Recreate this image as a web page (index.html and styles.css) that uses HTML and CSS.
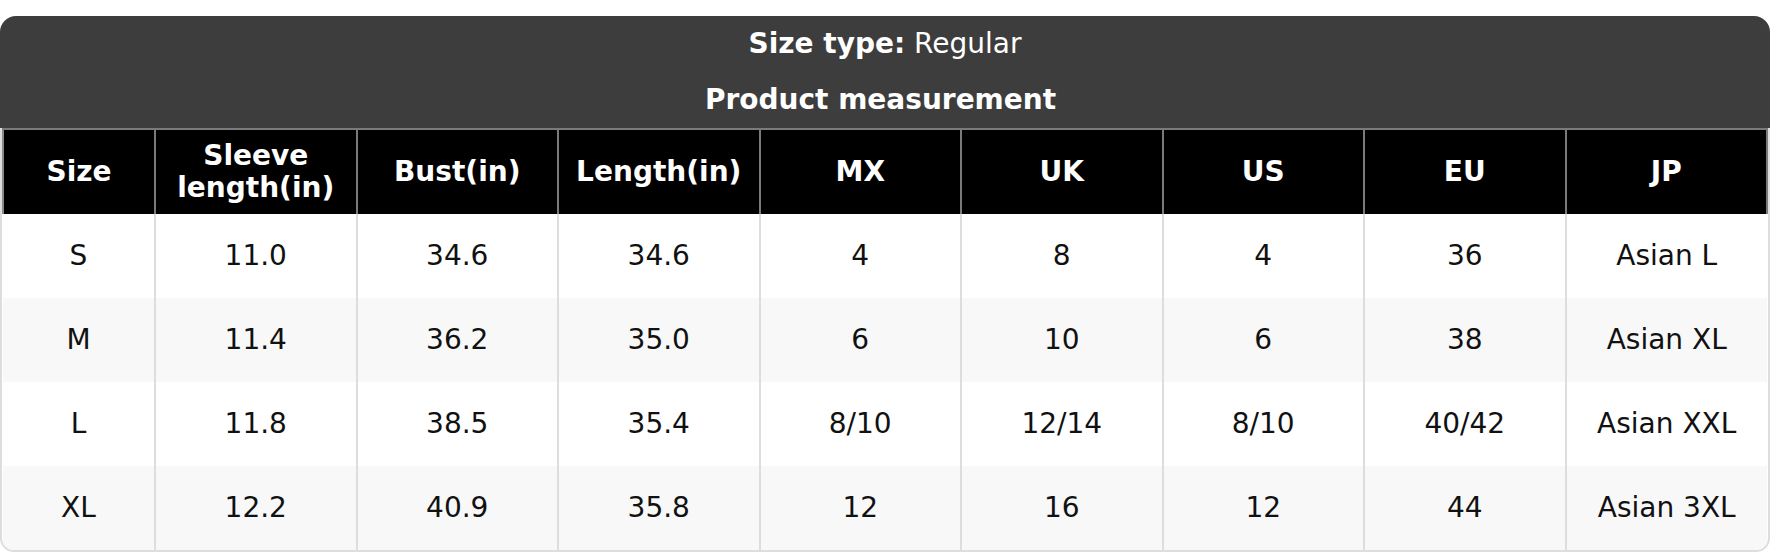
FILE: index.html
```html
<!DOCTYPE html>
<html lang="en">
<head>
<meta charset="utf-8">
<title>Size chart</title>
<link rel="stylesheet" href="styles.css">
</head>
<body>
<div class="card">
  <div class="title">
    <div class="title-line"><strong>Size type:</strong> Regular</div>
    <div class="title-line title-main"><strong>Product measurement</strong></div>
  </div>
  <div class="table-wrap">
    <table class="chart">
      <colgroup>
        <col class="col-size">
        <col><col><col><col><col><col><col><col>
      </colgroup>
      <thead>
        <tr>
          <th>Size</th>
          <th>Sleeve length(in)</th>
          <th>Bust(in)</th>
          <th>Length(in)</th>
          <th>MX</th>
          <th>UK</th>
          <th>US</th>
          <th>EU</th>
          <th>JP</th>
        </tr>
      </thead>
      <tbody>
        <tr><td>S</td><td>11.0</td><td>34.6</td><td>34.6</td><td>4</td><td>8</td><td>4</td><td>36</td><td>Asian L</td></tr>
        <tr><td>M</td><td>11.4</td><td>36.2</td><td>35.0</td><td>6</td><td>10</td><td>6</td><td>38</td><td>Asian XL</td></tr>
        <tr><td>L</td><td>11.8</td><td>38.5</td><td>35.4</td><td>8/10</td><td>12/14</td><td>8/10</td><td>40/42</td><td>Asian XXL</td></tr>
        <tr><td>XL</td><td>12.2</td><td>40.9</td><td>35.8</td><td>12</td><td>16</td><td>12</td><td>44</td><td>Asian 3XL</td></tr>
      </tbody>
    </table>
  </div>
</div>
</body>
</html>
```
FILE: styles.css
```css
html, body {
  margin: 0;
  padding: 0;
  background: #ffffff;
}

body {
  font-family: "DejaVu Sans", "Liberation Sans", sans-serif;
  font-size: 28px;
  color: #111111;
}

.card {
  margin-top: 16px;
  width: 1770px;
}

.title {
  background: #3d3d3d;
  color: #ffffff;
  border-radius: 16px 16px 0 0;
  padding: 11px 0 12px;
  display: flex;
  flex-direction: column;
  gap: 23px;
  text-align: center;
  line-height: 33px;
}

.title strong {
  font-weight: bold;
}

.title-main {
  padding-right: 9px;
}

.table-wrap {
  border: 2px solid #dddddd;
  border-top: 0;
  border-radius: 0 0 14px 14px;
  overflow: hidden;
}

.chart {
  width: 100%;
  border-collapse: collapse;
  table-layout: fixed;
}

.col-size {
  width: 152px;
}

.chart th {
  background: #000000;
  color: #ffffff;
  font-weight: bold;
  line-height: 32px;
  height: 84px;
  padding: 0 8px;
  border: 2px solid #7a7a7a;
  border-bottom: 0;
  vertical-align: middle;
  text-align: center;
}

.chart th:first-child {
  border-left-color: #8a8a8a;
}

.chart td {
  height: 84px;
  padding: 0 8px;
  text-align: center;
  vertical-align: middle;
  border-left: 2px solid #dddddd;
  line-height: 32px;
}

.chart td:first-child {
  border-left: 0;
}

.chart tbody tr:nth-child(even) td {
  background: #f8f8f8;
}
```
